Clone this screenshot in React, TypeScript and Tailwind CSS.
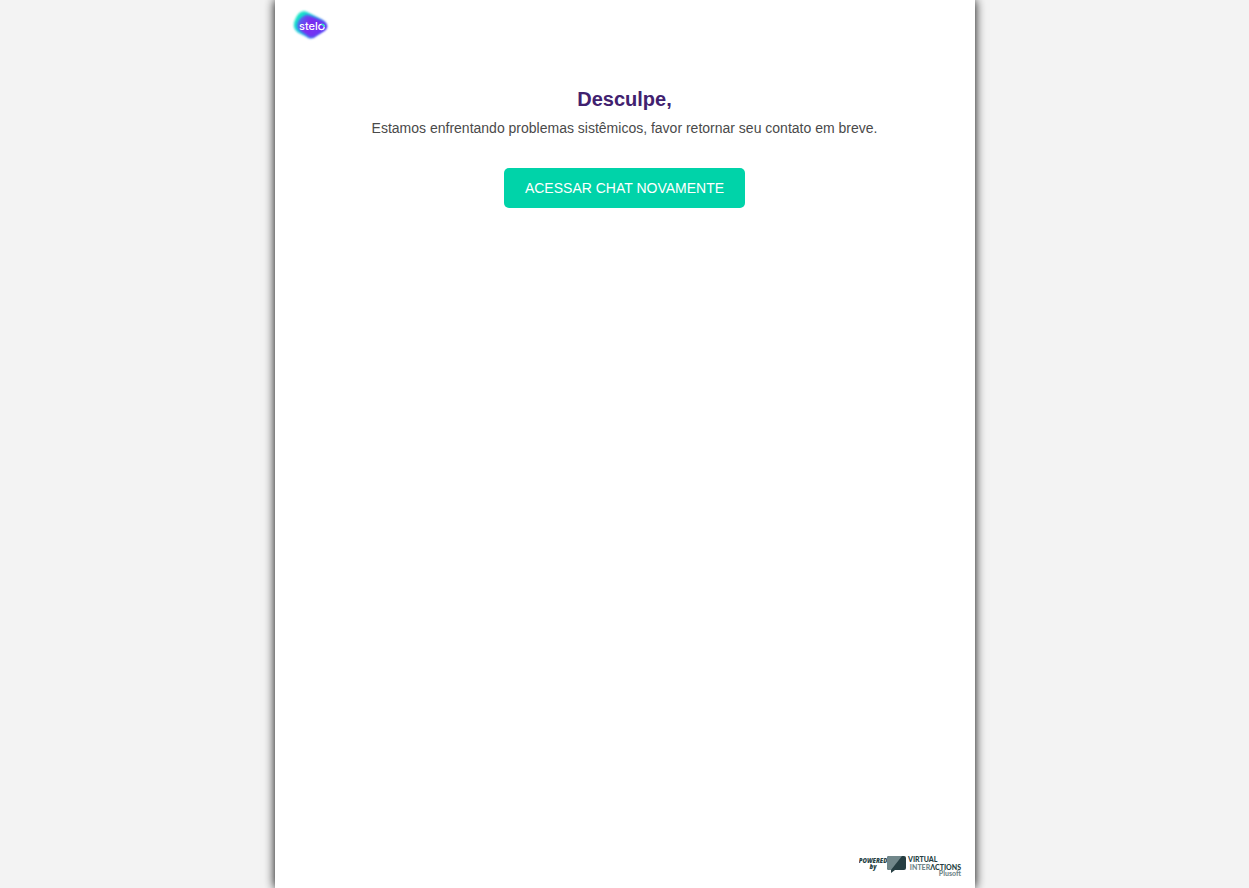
import React from "react";

function SteloLogo() {
  return (
    <svg width="38" height="32" viewBox="0 0 38 32" role="img" aria-label="stelo">
      <defs>
        <linearGradient id="glow" x1="0" y1="0" x2="1" y2="0.6">
          <stop offset="0" stopColor="#10f5b8" />
          <stop offset="0.45" stopColor="#14c8dc" />
          <stop offset="1" stopColor="#4a4cf8" />
        </linearGradient>
        <linearGradient id="body" x1="0" y1="0.2" x2="1" y2="0.6">
          <stop offset="0" stopColor="#4a70f0" />
          <stop offset="0.4" stopColor="#7a2df0" />
          <stop offset="1" stopColor="#6a35f5" />
        </linearGradient>
        <filter id="soft" x="-20%" y="-20%" width="140%" height="140%">
          <feGaussianBlur stdDeviation="0.9" />
        </filter>
      </defs>
      <path
        d="M10 3C12 1.500 15 2 18 4L31 10.500C37 14 37.500 19 33 22L25 27C21 30.500 18 30 15 27.500L7 23.500C2 20 2 15 4.500 10C6 7 7 4.500 10 3Z"
        fill="url(#glow)"
        filter="url(#soft)"
      />
      <path
        d="M13 7C15 5 18 6 21 7.500L32 12.500C37 16 36.500 19 33 21.500L25 26.500C21 29.500 18 28 16 26L10 22.500C6 20 5.500 16 7.500 12C9 9.500 10 8.500 13 7Z"
        fill="url(#body)"
        filter="url(#soft)"
      />
      <text
        x="8"
        y="21"
        fill="#fff"
        fontFamily="Inter, sans-serif"
        fontWeight="500"
        fontSize="11"
      >
        stel
      </text>
      <circle cx="30.500" cy="18" r="2.700" fill="none" stroke="#fff" strokeWidth="1.200" />
      <path d="M30.500 15.300A2.700 2.700 0 0 1 33.200 18" fill="none" stroke="#25dcc0" strokeWidth="1.400" />
    </svg>
  );
}

function PoweredBy() {
  return (
    <svg width="104" height="24" viewBox="0 0 104 24" role="img" aria-label="Powered by Virtual Interactions Plusoft">
      <g fontFamily="'Open Sans', sans-serif" fontWeight="800" fontStyle="italic" fontSize="6" fill="#263f43" textAnchor="middle">
        <text x="14" y="8">POWERED</text>
        <text x="14" y="14">by</text>
      </g>
      <path d="M30 1H45Q47 1 47 3V13Q47 15 45 15H36L32 18V15H30Q28 15 28 13V3Q28 1 30 1Z" fill="#263f43" />
      <path d="M30 1H43L32 15H30Q28 15 28 13V3Q28 1 30 1Z" fill="#71878a" />
      <g fontFamily="Lato, sans-serif" fontSize="7" fontWeight="900">
        <text x="49" y="7" fill="#263f43">VIRTUAL</text>
        <text x="102" y="15" fill="#71878a" textAnchor="end">
          INTER<tspan fill="#263f43">ΛCTIONS</tspan>
        </text>
        <text x="102" y="21" fill="#71878a" textAnchor="end">Plusoft</text>
      </g>
    </svg>
  );
}

export default function App() {
  return (
    <div className="min-h-screen bg-[#f3f3f3] font-['Liberation_Sans',Arial,sans-serif]">
      <div className="mx-auto flex min-h-screen w-full max-w-[700px] flex-col bg-white shadow-[0_0_10px_#000]">
        <header className="px-4 pt-[9px]">
          <a href="#" className="inline-block align-top">
            <SteloLogo />
          </a>
        </header>
        <main className="flex flex-1 flex-col items-center px-4 pt-[46px] text-center">
          <h1 className="text-[20px] leading-6 font-bold text-[#41216f]">Desculpe,</h1>
          <p className="mt-[7px] text-sm text-[#4a4a4a]">
            Estamos enfrentando problemas sistêmicos, favor retornar seu contato em breve.
          </p>
          <button
            type="button"
            className="mt-[30px] h-10 cursor-pointer rounded-[5px] bg-[#00d3a9] px-[21px] text-sm text-white uppercase"
          >
            Acessar chat novamente
          </button>
        </main>
        <footer className="flex justify-end px-3 pb-[9px]">
          <PoweredBy />
        </footer>
      </div>
    </div>
  );
}
